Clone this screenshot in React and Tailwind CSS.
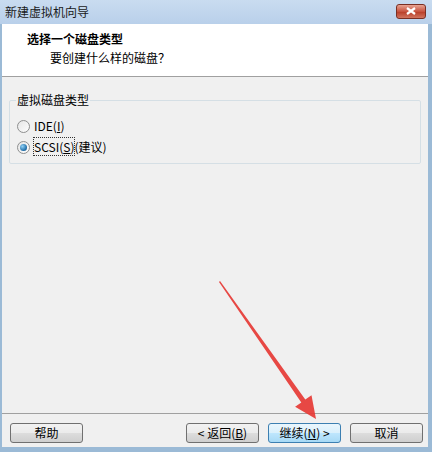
import React from 'react'

const font = { fontFamily: '"Noto Sans CJK SC", "Liberation Sans", sans-serif' }

function Radio({ checked }) {
  return (
    <span className="w-[13px] h-[13px] rounded-full border border-[#8e8f8f] bg-gradient-to-br from-[#e6e6e6] to-[#fdfdfd] flex items-center justify-center shrink-0">
      {checked && <span className="w-[7px] h-[7px] rounded-full bg-[radial-gradient(circle_at_35%_35%,#8fd0f5,#1b6aa5_70%,#0d3f6b)]" />}
    </span>
  )
}

function Btn({ children, primary }) {
  return (
    <button
      className={
        'w-[73px] h-[20px] rounded-[3px] border text-[12px] leading-none text-black flex items-center justify-center ' +
        (primary
          ? 'border-[#3c7fb1] bg-[linear-gradient(#eaf6fd_0%,#d9f0fc_50%,#bee6fd_51%,#a7d9f5_100%)]'
          : 'border-[#707070] bg-[linear-gradient(#f2f2f2_0%,#ebebeb_50%,#dddddd_51%,#cfcfcf_100%)]')
      }
    >
      {children}
    </button>
  )
}

export default function App() {
  return (
    <div className="relative w-[432px] h-[452px] flex flex-col bg-[#9bbad6] overflow-hidden" style={font}>
      {/* title bar */}
      <div className="h-[24px] shrink-0 flex items-center justify-between pl-[5px] pr-[6px] bg-[linear-gradient(#c9dcf0,#b9d0ea)]">
        <span className="text-[12px] text-[#1a1a1a]">新建虚拟机向导</span>
        <div className="w-[30px] h-[15px] mt-[-2px] rounded-[3px] border border-[#7a2f23] bg-[linear-gradient(#e8a493,#c7533f_50%,#b73b25_51%,#d1745f)] flex items-center justify-center">
          <svg width="10" height="8" viewBox="0 0 10 8">
            <path d="M1 1 L9 7 M9 1 L1 7" stroke="#fff" strokeWidth="2.2" />
          </svg>
        </div>
      </div>

      {/* client area */}
      <div className="flex-1 flex flex-col ml-[2px] mr-[4px] mb-[5px] bg-[#f0f0f0]">
        <div className="h-[53px] shrink-0 bg-white border-b border-[#a0a0a0] pl-[25px] pt-[7px]">
          <div className="text-[12px] font-bold leading-[16px] text-black">选择一个磁盘类型</div>
          <div className="text-[12px] leading-[16px] text-black pl-[23px] mt-[3px]">要创建什么样的磁盘？</div>
        </div>

        <div className="flex-1 px-[7px] pt-[15px]">
          <fieldset className="border border-[#d5dfe5] rounded-[2px] h-[72px] px-[7px]">
            <legend className="text-[12px] leading-[16px] px-[1px] ml-[-1px] text-black">虚拟磁盘类型</legend>
            <div className="flex items-center gap-[4px] mt-[10px] text-[12px] leading-[16px]">
              <Radio />
              <span>IDE(<span className="underline">I</span>)</span>
            </div>
            <div className="flex items-center gap-[4px] mt-[5px] text-[12px] leading-[16px]">
              <Radio checked />
              <span>
                <span className="outline outline-1 outline-dotted outline-[#333]">SCSI(<span className="underline">S</span>)</span>(建议)
              </span>
            </div>
          </fieldset>
        </div>

        <div className="h-[34px] shrink-0 border-t border-[#a0a0a0] flex items-start pt-[9px] pl-[8px] pr-[5px]">
          <Btn>帮助</Btn>
          <div className="flex-1" />
          <div className="flex gap-[9px]">
            <Btn>&lt; 返回(<span className="underline">B</span>)</Btn>
            <Btn primary>继续(<span className="underline">N</span>) &gt;</Btn>
            <Btn>取消</Btn>
          </div>
        </div>
      </div>

      {/* red annotation arrow */}
      <svg className="absolute inset-0 pointer-events-none" width="432" height="452" viewBox="0 0 432 452">
        <polygon
          points="219,282 220,281 305.3,399.6 311.5,395.2 316,419 295.1,406.8 301.3,402.4"
          fill="#e63a35"
          opacity="0.92"
        />
      </svg>
    </div>
  )
}
